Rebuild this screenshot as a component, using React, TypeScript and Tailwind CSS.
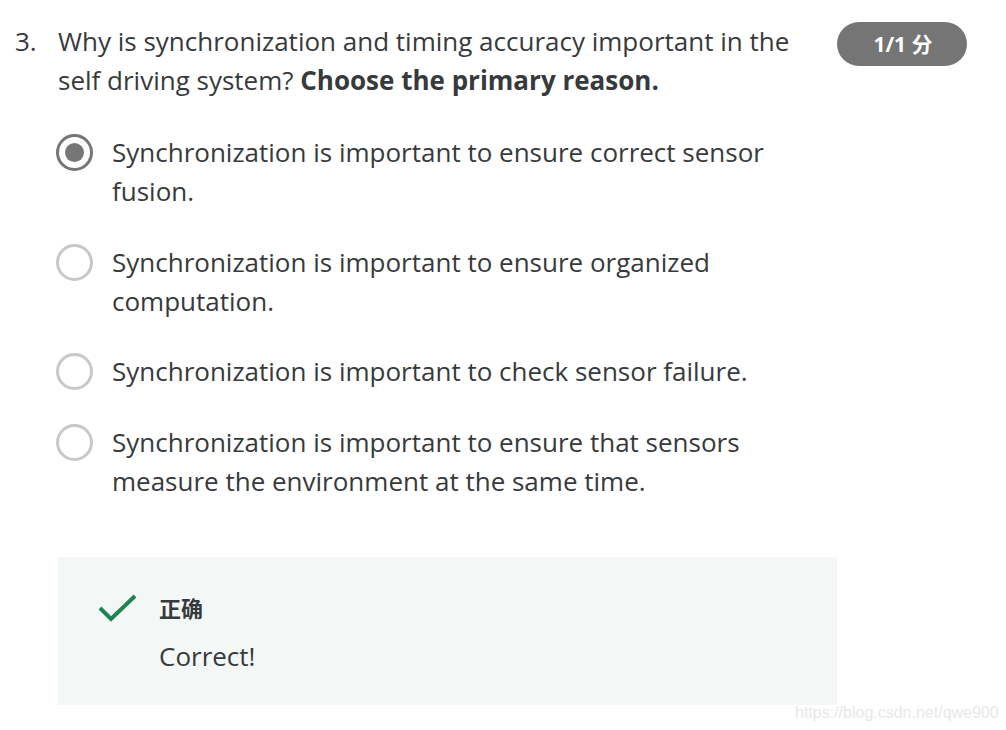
import React from 'react';

const options = [
  'Synchronization is important to ensure correct sensor fusion.',
  'Synchronization is important to ensure organized computation.',
  'Synchronization is important to check sensor failure.',
  'Synchronization is important to ensure that sensors measure the environment at the same time.',
];

function Radio({ checked }: { checked: boolean }) {
  return (
    <div
      className={`mt-[1px] flex h-[37px] w-[37px] shrink-0 items-center justify-center rounded-full border-[3px] ${
        checked ? 'border-[#767676]' : 'border-[#c8c8c8]'
      }`}
    >
      {checked && <div className="h-[19px] w-[19px] rounded-full bg-[#767676]" />}
    </div>
  );
}

export default function App() {
  return (
    <div
      className="relative h-[730px] w-[1006px] overflow-hidden bg-white text-[#373a3c]"
      style={{ fontFamily: '"Open Sans", "Noto Sans CJK SC", sans-serif' }}
    >
      <div className="flex items-start pt-[22px]">
        {/* Question */}
        <div className="flex w-[800px] text-[26px] leading-[39px]">
          <span className="w-[58px] shrink-0 pl-[15px]">3.</span>
          <p className="w-[742px]">
            Why is synchronization and timing accuracy important in the self driving system?{' '}
            <strong className="font-bold">Choose the primary reason.</strong>
          </p>
        </div>
        <div className="ml-[37px] flex h-[44px] w-[130px] items-center justify-center rounded-full bg-[#757575] pt-[2px] pl-[2px] text-[21px] font-bold text-white">
          1/1 分
        </div>
      </div>

      {/* Options */}
      <div className="ml-[56px] mt-[33px] flex w-[720px] flex-col gap-[31.7px]">
        {options.map((opt, i) => (
          <div key={i} className="flex items-start gap-[19px]">
            <Radio checked={i === 0} />
            <span className="text-[26px] leading-[39px]">{opt}</span>
          </div>
        ))}
      </div>

      {/* Feedback */}
      <div className="ml-[58px] mt-[56px] flex h-[148px] w-[779px] gap-[21px] bg-[#f3f8f6] pl-[40px] pt-[36px]">
        <svg width="40" height="32" viewBox="0 0 40 32" className="shrink-0">
          <path d="M2 15 L13 26 L37 3" fill="none" stroke="#1f8354" strokeWidth="4" />
        </svg>
        <div>
          <div className="text-[22px] font-bold leading-[30px]">正确</div>
          <div className="mt-[17px] text-[26px] leading-[32px]">Correct!</div>
        </div>
      </div>

      <div
        className="absolute left-[795px] top-[701px] text-[16px] text-[#e8e8e8]"
        style={{ fontFamily: '"Liberation Sans", Arial, sans-serif' }}
      >
        https://blog.csdn.net/qwe900
      </div>
    </div>
  );
}
